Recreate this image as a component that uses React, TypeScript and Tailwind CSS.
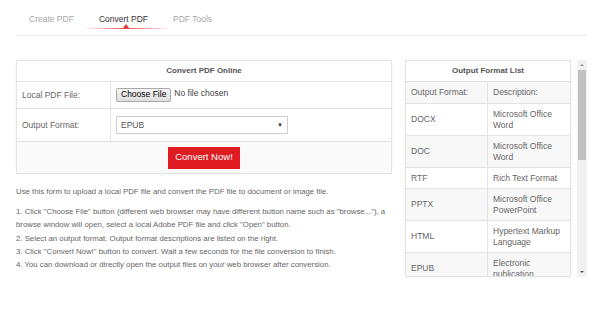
import React from "react";

const formats = [
  { fmt: "DOCX", desc: "Microsoft Office Word" },
  { fmt: "DOC", desc: "Microsoft Office Word" },
  { fmt: "RTF", desc: "Rich Text Format" },
  { fmt: "PPTX", desc: "Microsoft Office PowerPoint" },
  { fmt: "HTML", desc: "Hypertext Markup Language" },
  { fmt: "EPUB", desc: "Electronic publication" },
];

export default function App() {
  return (
    <div className="w-[600px] h-[309px] overflow-hidden bg-white pl-[16px] pr-[13px] text-[#666]" style={{ fontFamily: '"Liberation Sans", Arial, sans-serif' }}>
      {/* tabs */}
      <div className="relative flex h-[36px] items-center gap-[25px] border-b border-[#e9e9e9] pl-[13px] pt-[4px] text-[8.5px] w-[571px]">
        <span className="text-[#a8a8a8]">Create PDF</span>
        <span className="relative text-[#333]">
          Convert PDF
          <span className="absolute left-[-16px] right-[-22px] top-[14.5px] h-[1px] bg-gradient-to-r from-transparent via-[#ef4a4a] to-transparent" />
          <span className="absolute left-[24px] top-[10.5px] h-0 w-0 border-x-[3px] border-b-[4px] border-x-transparent border-b-[#e2383d]" />
        </span>
        <span className="text-[#a8a8a8]">PDF Tools</span>
      </div>

      <div className="mt-[24px] flex items-start">
        {/* left column */}
        <div className="w-[376px] shrink-0">
          <div className="border border-[#e3e3e3] shadow-[0_0_2px_rgba(0,0,0,0.06)] text-[8.5px]">
            <div className="flex h-[21px] items-center justify-center border-b border-[#e3e3e3] font-bold text-[#555] text-[8px]">
              Convert PDF Online
            </div>
            <div className="flex h-[27px] border-b border-[#e3e3e3]">
              <div className="flex w-[94px] items-center border-r border-[#e3e3e3] pl-[5px]">Local PDF File:</div>
              <div className="flex items-center gap-[3px] pl-[5px] pb-[1px]">
                <span className="flex h-[14px] items-center rounded-[2px] border border-[#a9a9a9] bg-gradient-to-b from-[#f6f6f6] to-[#dedede] px-[4px] text-[8.5px] text-black">Choose File</span>
                <span className="-mt-[3px] text-[#444]">No file chosen</span>
              </div>
            </div>
            <div className="flex h-[33px] border-b border-[#e3e3e3]">
              <div className="flex w-[94px] items-center border-r border-[#e3e3e3] pl-[5px]">Output Format:</div>
              <div className="flex items-center pl-[5px]">
                <div className="flex h-[18px] w-[172px] items-center justify-between border border-[#cfcfcf] px-[4px] text-[#555]">
                  <span>EPUB</span>
                  <span className="text-[6px] text-[#333]">▼</span>
                </div>
              </div>
            </div>
            <div className="flex h-[31px] items-center justify-center bg-[#fafafa]">
              <button className="h-[22px] w-[72px] bg-[#e01b22] text-[9.5px] text-white">Convert Now!</button>
            </div>
          </div>

          <p className="mt-[11px] text-[7.8px] leading-[13px]">
            Use this form to upload a local PDF file and convert the PDF file to document or image file.
          </p>
          <div className="mt-[7px] text-[7.8px] leading-[13.3px]">
            <p>1. Click "Choose File" button (different web browser may have different button name such as "browse..."), a browse window will open, select a local Adobe PDF file and click "Open" button.</p>
            <p>2. Select an output format. Output format descriptions are listed on the right.</p>
            <p>3. Click "Convert Now!" button to convert. Wait a few seconds for the file conversion to finish.</p>
            <p>4. You can download or directly open the output files on your web browser after conversion.</p>
          </div>
        </div>

        {/* right column */}
        <div className="ml-[13px] h-[217px] w-[166px] shrink-0 overflow-hidden border border-[#e3e3e3] shadow-[0_0_2px_rgba(0,0,0,0.06)] text-[8.5px] text-[#666]">
          <div className="flex h-[21px] items-center justify-center border-b border-[#e3e3e3] font-bold text-[8px] text-[#555]">
            Output Format List
          </div>
          <div className="flex h-[22px] border-b border-[#e3e3e3] bg-[#f8f8f8]">
            <div className="flex w-[82px] items-center border-r border-[#e3e3e3] pl-[5px]">Output Format:</div>
            <div className="flex flex-1 items-center pl-[5px]">Description:</div>
          </div>
          {formats.map((f, i) => (
            <div key={f.fmt} className={`flex border-b border-[#e3e3e3] ${f.fmt === "RTF" ? "h-[21px]" : "h-[32px]"} ${i % 2 === 1 ? "bg-[#f8f8f8]" : "bg-white"}`}>
              <div className="flex w-[82px] items-center border-r border-[#e3e3e3] pl-[5px] text-[#666]">{f.fmt}</div>
              <div className="flex flex-1 items-center pl-[5px] pr-[8px] leading-[11px] text-[#666]">{f.desc}</div>
            </div>
          ))}
        </div>

        {/* scrollbar */}
        <div className="ml-[6px] flex h-[217px] w-[10px] shrink-0 flex-col items-center bg-[#f1f1f1]">
          <span className="mt-[4px] h-0 w-0 border-x-[2px] border-b-[2px] border-x-transparent border-b-[#888]" />
          <div className="mt-[4px] h-[90px] w-[8px] bg-[#c1c1c1]" />
          <div className="flex-1" />
          <span className="mb-[4px] h-0 w-0 border-x-[2px] border-t-[2px] border-x-transparent border-t-[#505050]" />
        </div>
      </div>
    </div>
  );
}
